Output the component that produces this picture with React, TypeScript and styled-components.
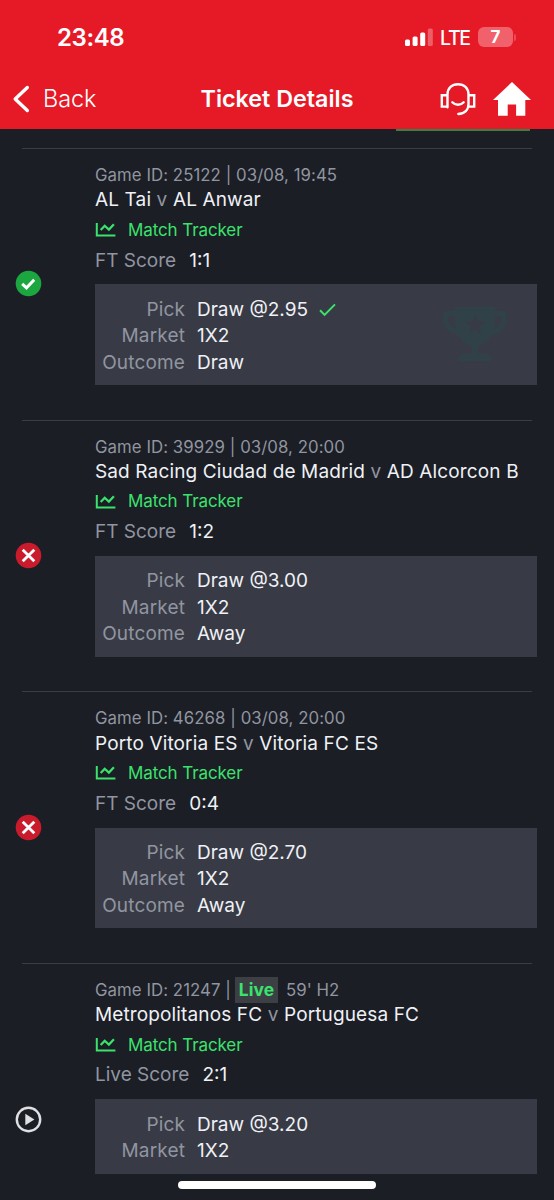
import React from 'react';
import styled, { createGlobalStyle } from 'styled-components';

const GlobalStyle = createGlobalStyle`
  * { box-sizing: border-box; }
  html, body { margin: 0; background: #1b1e25; }
  body { font-family: Inter, "Liberation Sans", sans-serif; overflow: hidden; }
`;

const Screen = styled.div`
  position: relative;
  width: 554px;
  height: 1200px;
  overflow: hidden;
  background: #1b1e25;
  color: #eff1f5;
`;

const Header = styled.header`
  height: 129px;
  background: #e61a27;
  color: #fff;
`;

const StatusBar = styled.div`
  display: flex;
  align-items: center;
  justify-content: space-between;
  height: 74px;
  padding: 0 38px 0 57px;
`;

const Clock = styled.span`
  font-size: 24px;
  font-weight: 600;
  letter-spacing: -0.4px;
`;

const Indicators = styled.div`
  display: flex;
  align-items: center;
`;

const Carrier = styled.span`
  margin: 1px 0 0 7px;
  width: 30px;
  font-size: 19.5px;
  font-weight: 500;
  line-height: 24px;
  letter-spacing: -1.3px;
  white-space: nowrap;
`;

const Battery = styled.span`
  width: 35px;
  height: 20px;
  margin-left: 8px;
  border-radius: 6px;
  background: #f0616b;
  font-size: 17px;
  font-weight: 700;
  line-height: 20px;
  text-align: center;
`;

const BatteryTip = styled.span`
  width: 2px;
  height: 7px;
  margin: 0 0 0 1px;
  border-radius: 0 2px 2px 0;
  background: #ed4a55;
`;

const NavBar = styled.nav`
  display: grid;
  grid-template-columns: 1fr auto 1fr;
  align-items: center;
  height: 49px;
  padding: 0 23px 0 12px;
`;

const Back = styled.div`
  display: flex;
  align-items: center;
  gap: 13px;
  font-size: 23.5px;
  font-weight: 300;
  letter-spacing: -0.1px;
`;

const Title = styled.h1`
  margin: 0 0 0 11px;
  font-size: 23.3px;
  font-weight: 600;
  letter-spacing: 0;
  white-space: nowrap;
`;

const Actions = styled.div`
  display: flex;
  justify-content: flex-end;
  align-items: center;
  gap: 17px;
`;

const ScrolledEdge = styled.div`
  display: flex;
  justify-content: flex-end;
  height: 19.2px;
  padding-right: 24px;
`;

const EdgeLine = styled.span`
  width: 134px;
  height: 2px;
  background: #3b7f47;
`;

const Bet = styled.article<{ $height: number }>`
  display: flex;
  height: ${p => p.$height}px;
  margin: 0 22px;
  border-top: 1.5px solid #3a3d44;
`;

const StatusColumn = styled.div`
  display: flex;
  align-items: center;
  flex: 0 0 73px;
  margin-left: -7px;
  margin-right: 7px;
  padding-bottom: 1px;
`;

const Details = styled.div`
  flex: 0 0 442px;
  padding-top: 13.8px;
`;

const Meta = styled.div`
  display: flex;
  align-items: center;
  height: 24.5px;
  color: #9195a0;
  font-size: 16.8px;
  letter-spacing: 0.06px;
  white-space: pre;
`;

const LiveTag = styled.span`
  width: 43px;
  height: 26px;
  margin: 0 8px 0 4px;
  background: #3c3f44;
  color: #3be36d;
  font-size: 17.4px;
  font-weight: 700;
  line-height: 26px;
  text-align: center;
`;

const Teams = styled.div`
  height: 23.5px;
  font-size: 19px;
  letter-spacing: 0.13px;
  line-height: 26px;
  white-space: nowrap;
`;

const Versus = styled.span`
  color: #9195a0;
`;

const Tracker = styled.div`
  display: flex;
  align-items: center;
  gap: 12px;
  height: 37.6px;
  color: #3be36d;
  font-size: 17px;
  letter-spacing: -0.1px;
`;

const Score = styled.div`
  display: flex;
  gap: 13px;
  height: 22.2px;
  color: #9195a0;
  font-size: 19px;
  line-height: 23px;
`;

const Value = styled.span`
  color: #eff1f5;
`;

const Panel = styled.div`
  display: flex;
  justify-content: space-between;
  align-items: center;
  margin-top: 13.7px;
  padding: 12.4px 30px 9.2px 0;
  background: #383b45;
`;

const Facts = styled.dl`
  display: grid;
  grid-template-columns: 90px auto;
  column-gap: 12px;
  grid-auto-rows: 26.4px;
  margin: 0;
  font-size: 19px;
  line-height: 26.4px;
`;

const Label = styled.dt`
  color: #9195a0;
  letter-spacing: 0.15px;
  text-align: right;
`;

const Fact = styled.dd`
  display: flex;
  align-items: center;
  gap: 11px;
  margin: 0;
  white-space: nowrap;
`;

const HomeIndicator = styled.div`
  position: absolute;
  left: 178px;
  bottom: 11px;
  width: 198px;
  height: 8px;
  border-radius: 4px;
  background: #fff;
`;

type Status = 'won' | 'lost' | 'live';

interface BetData {
  id: string;
  time?: string;
  minute?: string;
  home: string;
  away: string;
  score: string;
  odds: string;
  outcome?: string;
  status: Status;
}

const bets: BetData[] = [
  { id: '25122', time: '03/08, 19:45', home: 'AL Tai', away: 'AL Anwar', score: '1:1', odds: '2.95', outcome: 'Draw', status: 'won' },
  { id: '39929', time: '03/08, 20:00', home: 'Sad Racing Ciudad de Madrid', away: 'AD Alcorcon B', score: '1:2', odds: '3.00', outcome: 'Away', status: 'lost' },
  { id: '46268', time: '03/08, 20:00', home: 'Porto Vitoria ES', away: 'Vitoria FC ES', score: '0:4', odds: '2.70', outcome: 'Away', status: 'lost' },
  { id: '21247', minute: "59' H2", home: 'Metropolitanos FC', away: 'Portuguesa FC', score: '2:1', odds: '3.20', status: 'live' },
];

const SignalIcon = () => (
  <svg width="28" height="18" viewBox="0 0 28 18" fill="#fff">
    <rect x="0" y="11.5" width="5" height="6.5" rx="1.5" />
    <rect x="7.6" y="8.5" width="5" height="9.5" rx="1.5" />
    <rect x="15.2" y="4.5" width="5" height="13.5" rx="1.5" />
    <rect x="22.8" y="0.5" width="5" height="17.5" rx="1.5" opacity=".3" />
  </svg>
);

const BackIcon = () => (
  <svg width="18" height="28" viewBox="0 0 18 28" fill="none" stroke="#fff" strokeWidth="3.4" strokeLinecap="round" strokeLinejoin="round">
    <path d="M15.3 2.5 3.2 14l12.1 11.5" />
  </svg>
);

const HeadsetIcon = () => (
  <svg width="36" height="34" viewBox="0 0 36 34" fill="none" stroke="#fff" strokeWidth="2.4">
    <path d="M7.5 25.2V12.5C7.5 6 12 2.200 18 2.200S28.5 6 28.5 12.5V22c0 6-3.8 9.700-10.200 10" strokeLinecap="round" />
    <path d="M7.5 13.200H1.8v11.400h5.700M28.5 13.200h5.700v11.400h-5.700" />
    <path d="M12.300 20.300c2.800 3.200 8.600 3.200 11.400 0" strokeLinecap="round" />
  </svg>
);

const HouseIcon = () => (
  <svg width="38" height="34" viewBox="0 0 38 34" fill="#fff">
    <path d="M19 0 0 18h5v15.7h9.7V22.5h8.400v11.200h9.200V18H38z" />
  </svg>
);

const ChartIcon = () => (
  <svg width="21" height="15" viewBox="0 0 21 15" fill="none" stroke="currentColor" strokeWidth="2">
    <path d="M1.8 1v12.4h18.6" />
    <path d="m5.7 8 4-4.2 4.2 3.8 5-5.3" strokeWidth="2.2" />
  </svg>
);

const TickIcon = () => (
  <svg width="17" height="14" viewBox="0 0 17 14" fill="none" stroke="#3be36d" strokeWidth="2">
    <path d="m1 7.3 4.6 4.6L16 1.4" />
  </svg>
);

const TrophyIcon = () => (
  <svg width="64" height="58" viewBox="0 0 64 58">
    <path d="M14 6.500H2.800V13c0 6 5 10.500 14 13M50 6.500h11.200V13c0 6-5 10.500-14 13" fill="none" stroke="#304247" strokeWidth="5" strokeLinejoin="round" />
    <path d="M12 0h40v13c0 15-7 22-17 27v7h8q6 0 6 7H15q0-7 6-7h8v-7C19 35 12 28 12 13z" fill="#304247" />
    <path d="m32 7 2.800 7.200 7.600.4-5.900 4.900 2 7.500-6.500-4.200-6.500 4.200 2-7.500-5.900-4.900 7.600-.4z" fill="#383b45" />
  </svg>
);

const StatusIcon = ({ status }: { status: Status }) => (
  <svg width="27" height="27" viewBox="0 0 27 27" fill="none">
    {status === 'won' && (
      <>
        <circle cx="13.5" cy="13.5" r="12.8" fill="#1ba640" />
        <path d="m7.2 13.8 4.3 4 7.7-8" stroke="#fff" strokeWidth="3" />
      </>
    )}
    {status === 'lost' && (
      <>
        <circle cx="13.5" cy="13.5" r="12.8" fill="#c91b2b" />
        <path d="m7.7 7.7 11.6 11.6m0-11.6L7.7 19.3" stroke="#fff" strokeWidth="2.8" />
      </>
    )}
    {status === 'live' && (
      <>
        <circle cx="13.5" cy="13.5" r="11.7" stroke="#dfe0e3" strokeWidth="2.4" />
        <path d="m10.3 7.8 9.1 5.7-9.1 5.7z" fill="#dfe0e3" />
      </>
    )}
  </svg>
);

const BetRow = ({ bet }: { bet: BetData }) => {
  const live = bet.status === 'live';
  return (
    <Bet $height={live ? 314 : 271.6}>
      <StatusColumn>
        <StatusIcon status={bet.status} />
      </StatusColumn>
      <Details>
        <Meta>
          <span>Game ID: {bet.id} |{bet.time && ` ${bet.time}`}</span>
          {live && <LiveTag>Live</LiveTag>}
          {bet.minute && <span>{bet.minute}</span>}
        </Meta>
        <Teams>
          {bet.home} <Versus>v</Versus> {bet.away}
        </Teams>
        <Tracker>
          <ChartIcon />
          <span>Match Tracker</span>
        </Tracker>
        <Score>
          <span>{live ? 'Live' : 'FT'} Score</span>
          <Value>{bet.score}</Value>
        </Score>
        <Panel>
          <Facts>
            <Label>Pick</Label>
            <Fact>
              Draw @{bet.odds}
              {bet.status === 'won' && <TickIcon />}
            </Fact>
            <Label>Market</Label>
            <Fact>1X2</Fact>
            {bet.outcome && (
              <>
                <Label>Outcome</Label>
                <Fact>{bet.outcome}</Fact>
              </>
            )}
          </Facts>
          {bet.status === 'won' && <TrophyIcon />}
        </Panel>
      </Details>
    </Bet>
  );
};

export default function App() {
  return (
    <Screen>
      <GlobalStyle />
      <Header>
        <StatusBar>
          <Clock>23:48</Clock>
          <Indicators>
            <SignalIcon />
            <Carrier>LTE</Carrier>
            <Battery>7</Battery>
            <BatteryTip />
          </Indicators>
        </StatusBar>
        <NavBar>
          <Back>
            <BackIcon />
            <span>Back</span>
          </Back>
          <Title>Ticket Details</Title>
          <Actions>
            <HeadsetIcon />
            <HouseIcon />
          </Actions>
        </NavBar>
      </Header>
      <main>
        <ScrolledEdge>
          <EdgeLine />
        </ScrolledEdge>
        {bets.map(bet => (
          <BetRow key={bet.id} bet={bet} />
        ))}
      </main>
      <HomeIndicator />
    </Screen>
  );
}
